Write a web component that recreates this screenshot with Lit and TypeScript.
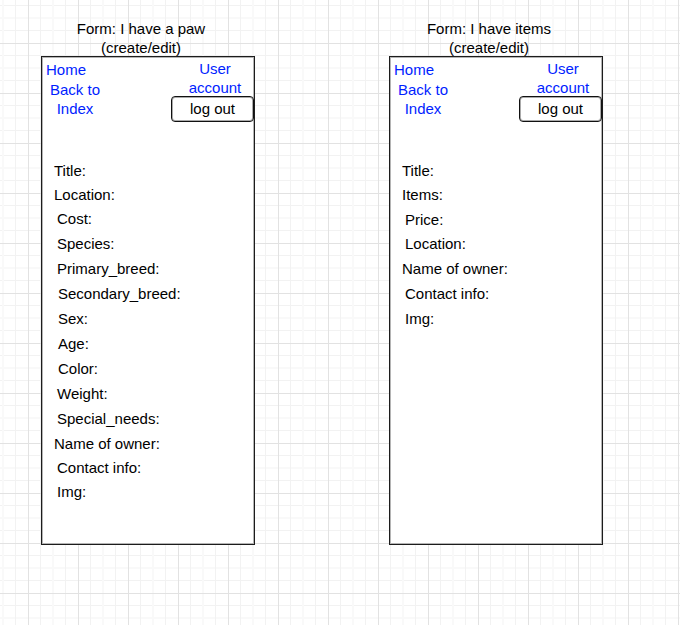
import { LitElement, html, css } from "lit";
import { customElement, property } from "lit/decorators.js";
import { classMap } from "lit/directives/class-map.js";

type Indent = "near" | "mid" | "far";

interface Field {
  label: string;
  indent: Indent;
  tight?: boolean;
}

const pawFields: Field[] = [
  { label: "Title:", indent: "near", tight: true },
  { label: "Location:", indent: "near", tight: true },
  { label: "Cost:", indent: "mid" },
  { label: "Species:", indent: "mid" },
  { label: "Primary_breed:", indent: "mid" },
  { label: "Secondary_breed:", indent: "far" },
  { label: "Sex:", indent: "far" },
  { label: "Age:", indent: "far" },
  { label: "Color:", indent: "far" },
  { label: "Weight:", indent: "mid" },
  { label: "Special_needs:", indent: "mid" },
  { label: "Name of owner:", indent: "near", tight: true },
  { label: "Contact info:", indent: "mid", tight: true },
  { label: "Img:", indent: "mid", tight: true },
];

const itemFields: Field[] = [
  { label: "Title:", indent: "near", tight: true },
  { label: "Items:", indent: "near" },
  { label: "Price:", indent: "mid", tight: true },
  { label: "Location:", indent: "mid" },
  { label: "Name of owner:", indent: "near" },
  { label: "Contact info:", indent: "mid" },
  { label: "Img:", indent: "mid" },
];

/** One phone-sized wireframe with its caption above it. */
@customElement("wire-screen")
export class WireScreen extends LitElement {
  @property() caption = "";
  @property({ attribute: false }) fields: Field[] = [];

  static styles = css`
    :host {
      display: flex;
      flex-direction: column;
    }
    .caption {
      margin: 0 14px -1px 0;
      font-size: 15px;
      font-weight: 400;
      line-height: 19px;
      text-align: center;
    }
    .frame {
      flex: 1;
      box-sizing: border-box;
      padding-bottom: 40px;
      background: #fff;
      border: 1px solid #1c1c1c;
      box-shadow: inset 0 0 0 1px #b4b4b4;
    }
    .bar {
      display: flex;
      justify-content: space-between;
      align-items: flex-start;
      margin-bottom: 37px;
    }
    .nav {
      display: flex;
      flex-direction: column;
      align-items: flex-start;
      gap: 1px;
      padding: 3px 0 0 4px;
    }
    .account {
      display: flex;
      flex-direction: column;
      align-items: center;
      width: 83px;
      padding-top: 2px;
    }
    a {
      color: #001eff;
      text-decoration: none;
      text-align: center;
    }
    .back {
      padding-left: 4px;
    }
    .user {
      padding-left: 5px;
    }
    button {
      width: 100%;
      height: 26px;
      margin: -1px 0 0;
      padding: 0 0 2px;
      font: inherit;
      line-height: 19px;
      color: #000;
      background: #fff;
      border: 1px solid #111;
      border-radius: 4px;
      box-shadow: inset 0 0 0 1px #aaa;
    }
    .fields {
      margin: 0;
      padding: 0;
      list-style: none;
      line-height: 24px;
    }
    .field {
      margin-bottom: 1px;
    }
    .tight {
      margin-bottom: 0;
    }
    .near {
      padding-left: 12px;
    }
    .mid {
      padding-left: 15px;
    }
    .far {
      padding-left: 16px;
    }
  `;

  render() {
    return html`
      <h2 class="caption">${this.caption}<br />(create/edit)</h2>
      <section class="frame">
        <header class="bar">
          <nav class="nav">
            <a href="#home">Home</a>
            <a class="back" href="#index">Back to<br />Index</a>
          </nav>
          <div class="account">
            <a class="user" href="#account">User<br />account</a>
            <button type="button">log out</button>
          </div>
        </header>
        <ul class="fields">
          ${this.fields.map(
            (f) => html`<li
              class=${classMap({ field: true, tight: !!f.tight, [f.indent]: true })}
            >${f.label}</li>`
          )}
        </ul>
      </section>
    `;
  }
}

@customElement("app-root")
export class AppRoot extends LitElement {
  static styles = css`
    :host {
      display: block;
      box-sizing: border-box;
      min-height: 100vh;
      padding: 19px 77px 40px 41px;
      font: 15px/19px "Liberation Sans", Arial, Helvetica, sans-serif;
      color: #000;
      background-color: #fff;
      background-image:
        linear-gradient(90deg, #e2e2e2 1px, transparent 1px),
        linear-gradient(#e2e2e2 1px, transparent 1px),
        linear-gradient(
          90deg,
          transparent 12px, #f2f2f2 12px 13px,
          transparent 13px 24px, #f9f9f9 24px 26px,
          transparent 26px 37px, #f2f2f2 37px 38px,
          transparent 38px
        ),
        linear-gradient(
          transparent 12px, #f2f2f2 12px 13px,
          transparent 13px 24px, #f9f9f9 24px 26px,
          transparent 26px 37px, #f2f2f2 37px 38px,
          transparent 38px
        );
      background-size: 50px 50px;
      background-position: 28px 43px;
    }
    .board {
      display: grid;
      grid-template-columns: 1fr 1fr;
      column-gap: 134px;
    }
  `;

  render() {
    return html`
      <main class="board">
        <wire-screen caption="Form: I have a paw" .fields=${pawFields}></wire-screen>
        <wire-screen caption="Form: I have items" .fields=${itemFields}></wire-screen>
      </main>
    `;
  }
}
